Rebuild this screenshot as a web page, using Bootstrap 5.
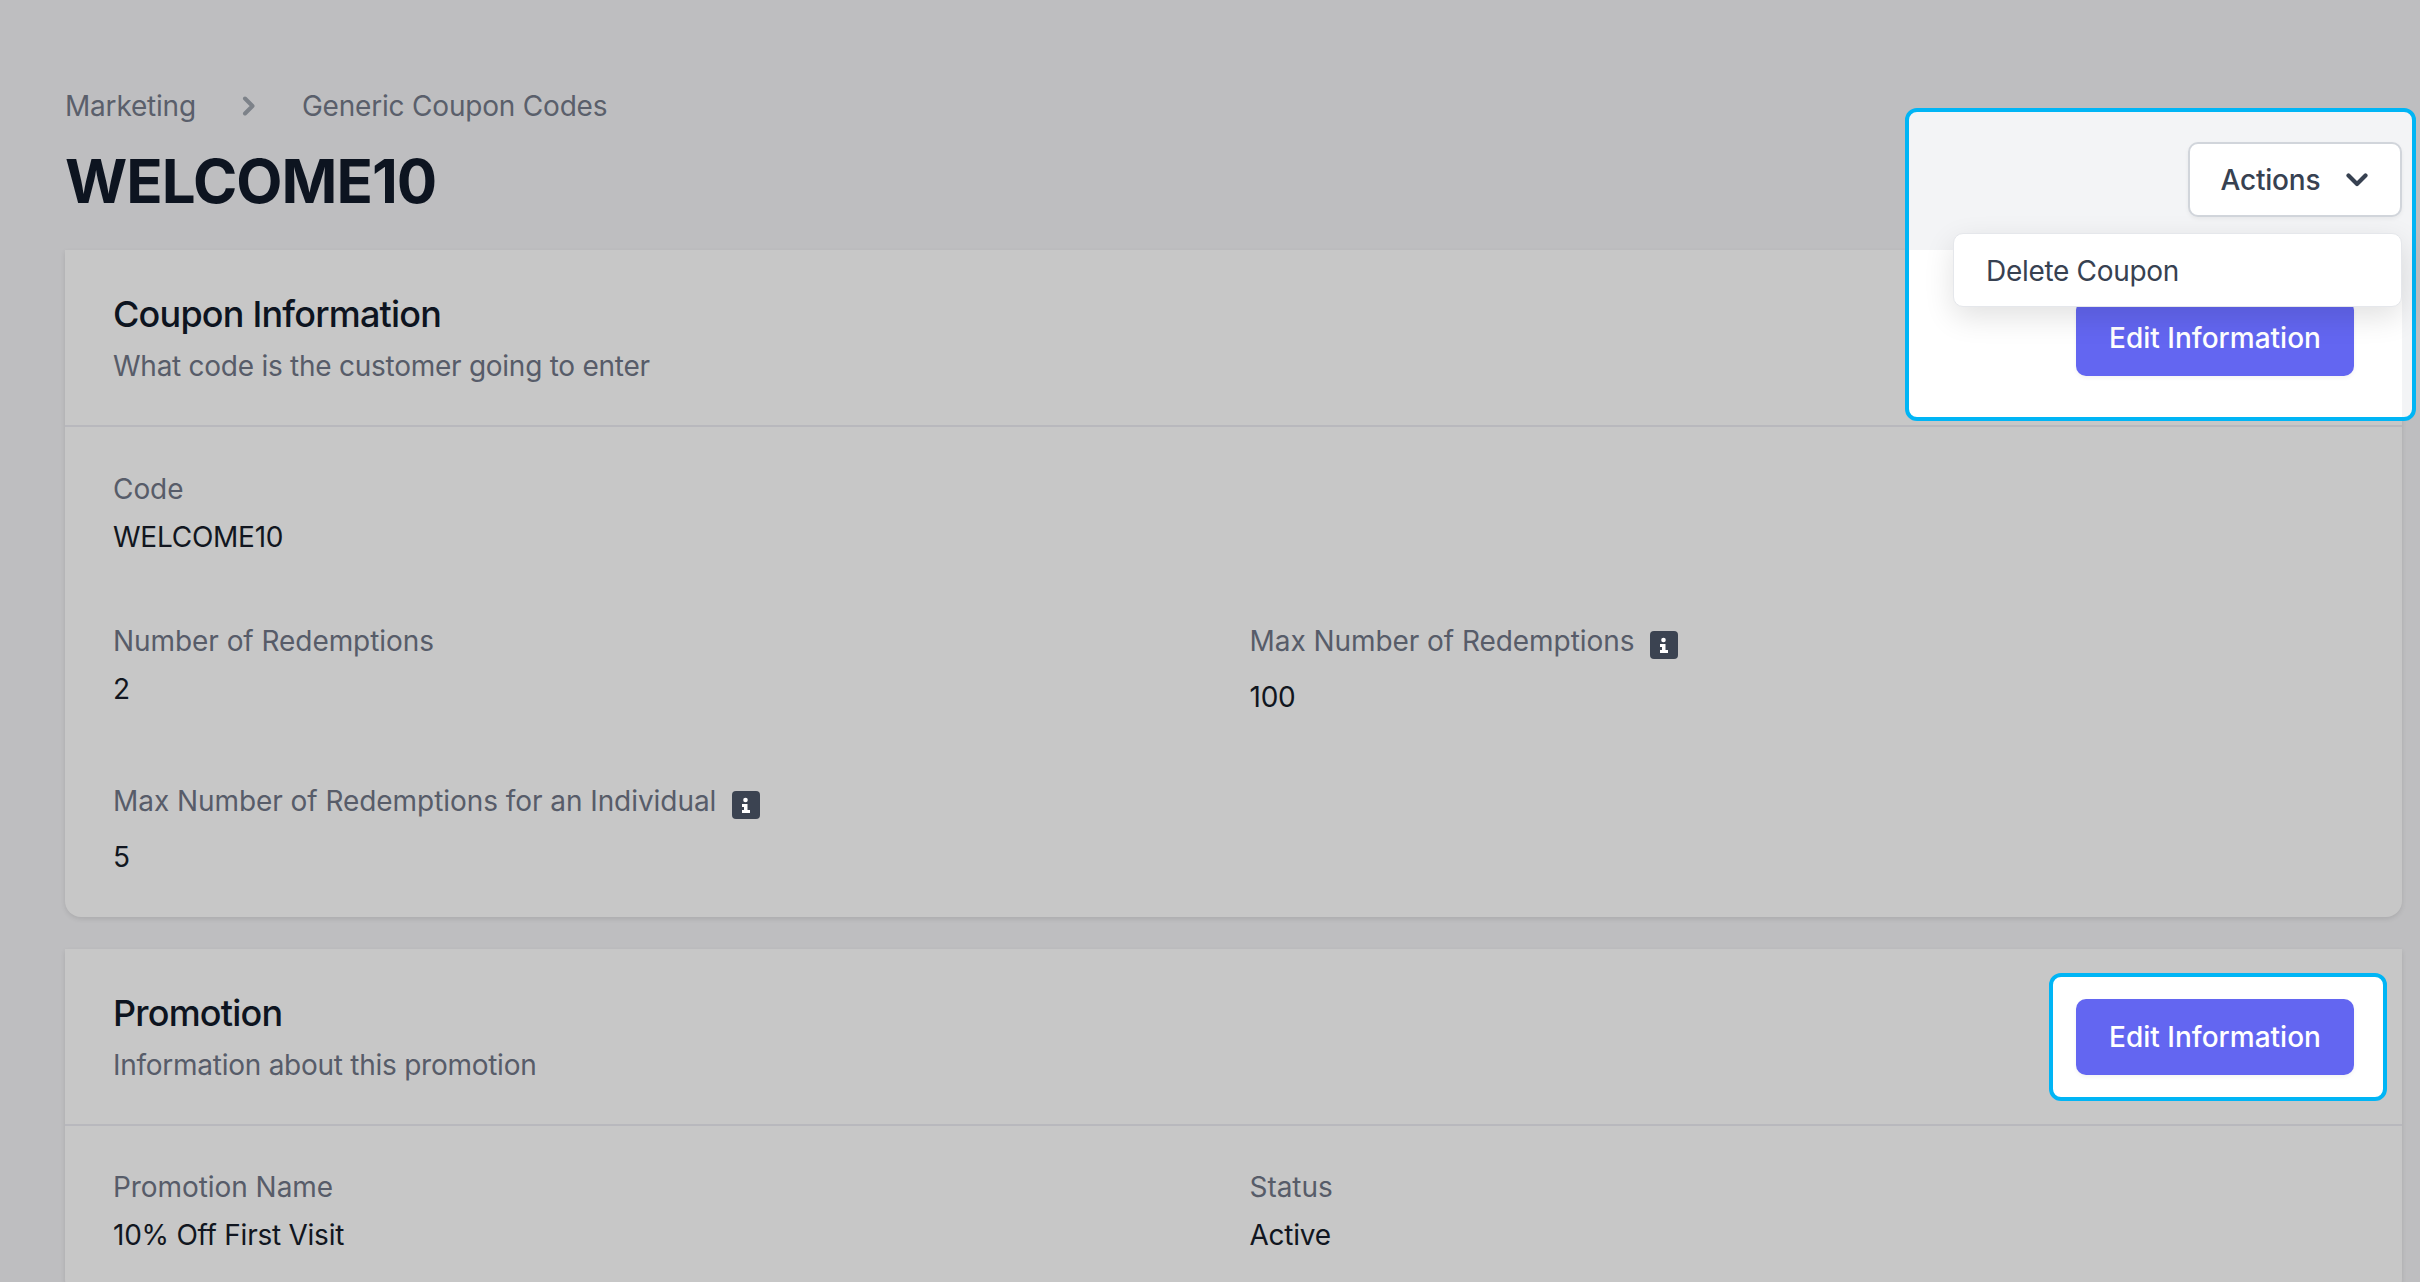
<!DOCTYPE html>
<html lang="en">
<head>
<meta charset="utf-8">
<title>WELCOME10</title>
<link href="https://cdn.jsdelivr.net/npm/bootstrap@5.3.0/dist/css/bootstrap.min.css" rel="stylesheet">
<style>
html,body{height:1282px;overflow:hidden}
body{background:#bebec0;font-family:Inter,"Liberation Sans",sans-serif;font-size:28px;line-height:40px;color:#111620}
.stage{position:relative;height:1282px;overflow:hidden;padding:86px 18px 0 65px}
.crumb-text{color:#5a5f6b;letter-spacing:-.2px}
.crumb-gap{gap:46px}
.page-title{font-size:60px;line-height:72px;font-weight:700;color:#0d1420;margin:19px 0 0;letter-spacing:-1px}
.head-row{margin-bottom:33px}
.act-wrap{position:relative;z-index:3}
.act-btn{height:75px;width:214.5px;padding:0 32px 0 31px;background:#fff;border:2px solid #d1d5db;border-radius:10px;color:#374151;font-size:28px;font-weight:500;line-height:40px;letter-spacing:-.2px;box-shadow:0 2px 4px rgba(0,0,0,.05)}
.act-btn:hover,.act-btn:active{background:#fff;border-color:#d1d5db;color:#374151}
.act-menu.dropdown-menu{position:absolute;top:91px;right:0;left:auto;width:449px;height:74px;margin:0;padding:17px 0;background:#fff;border:1px solid #e5e7eb;border-radius:10px;font-size:28px;box-shadow:0 10px 30px rgba(0,0,0,.12)}
.act-menu .dropdown-item{padding:0 32px;line-height:40px;color:#374151;font-weight:400;letter-spacing:-.3px}
.panel.card{background:#c7c7c7;border:0;border-radius:0 0 16px 16px;box-shadow:0 2px 5px rgba(0,0,0,.1);margin-bottom:32px;color:inherit;font-size:28px}
.panel-head{padding:40px 48px 40px 48px;border-bottom:2px solid #b8b8bd;height:177px}
.panel-title{font-size:36px;line-height:48px;font-weight:500;color:#0d1420;margin:0 0 8px;letter-spacing:-.8px}
.panel-sub{color:#575c69;margin:0;letter-spacing:-.26px}
.panel-body{padding:42px 48px 40px}
.panel-body-tight{padding-top:41px}
.grid-row{--bs-gutter-x:32px;--bs-gutter-y:64px}
.fld-label{color:#575c69;margin-bottom:8px;letter-spacing:-.06px}
.fld-value{letter-spacing:-.25px}
.info-line{margin-bottom:8px}
.info-ico{display:block;width:28px;height:28px;margin:10px 0 10px 16px;flex:none}
.prime-btn{position:relative;z-index:2;height:76px;width:278px;padding:0;background:#6366f1;border:0;border-radius:10px;color:#fff;font-size:28px;font-weight:500;line-height:40px;box-shadow:0 2px 4px rgba(0,0,0,.05)}
.prime-btn:hover,.prime-btn:active{background:#6366f1;color:#fff}
.spot{border:4px solid #00b5f5;border-radius:12px}
.spot-one{position:absolute;z-index:1;left:1905px;top:108px;width:511px;height:313px;background:linear-gradient(#f3f4f6,#f3f4f6) right top/10px 100% no-repeat,linear-gradient(#f3f4f6 138px,#fff 138px)}
.spot-two{background:#fff;padding:22px 29px 22px 23px;margin-right:-33px}
</style>
</head>
<body>
<div class="stage">
  <div class="spot spot-one"></div>
  <div class="d-flex justify-content-between align-items-end head-row">
    <div>
      <nav class="d-flex align-items-center crumb-gap">
        <span class="crumb-text">Marketing</span>
        <svg width="14" height="20" viewBox="0 0 14 20" aria-hidden="true"><path d="M3 2.500l7.500 7.500-7.500 7.500" fill="none" stroke="#7d8289" stroke-width="4" stroke-linecap="round" stroke-linejoin="round"/></svg>
        <span class="crumb-text">Generic Coupon Codes</span>
      </nav>
      <h1 class="page-title">WELCOME10</h1>
    </div>
    <div class="act-wrap">
      <button class="btn act-btn d-flex align-items-center justify-content-between" type="button">
        <span>Actions</span>
        <svg width="22" height="14" viewBox="0 0 22 14" aria-hidden="true"><path d="M2.500 2.500l8.500 8.500 8.500-8.500" fill="none" stroke="#374151" stroke-width="4.200" stroke-linecap="round" stroke-linejoin="round"/></svg>
      </button>
      <div class="dropdown-menu show act-menu"><a class="dropdown-item" href="#">Delete Coupon</a></div>
    </div>
  </div>

  <section class="card panel">
    <header class="panel-head d-flex justify-content-between align-items-center">
      <div>
        <h2 class="panel-title">Coupon Information</h2>
        <p class="panel-sub">What code is the customer going to enter</p>
      </div>
      <button class="btn prime-btn" type="button">Edit Information</button>
    </header>
    <div class="panel-body">
      <div class="row grid-row">
        <div class="col-12">
          <div class="fld-label">Code</div>
          <div class="fld-value">WELCOME10</div>
        </div>
        <div class="col-6">
          <div class="fld-label">Number of Redemptions</div>
          <div class="fld-value">2</div>
        </div>
        <div class="col-6">
          <div class="d-flex align-items-start info-line">
            <div class="fld-label mb-0">Max Number of Redemptions</div>
            <svg class="info-ico" viewBox="0 0 28 28" aria-hidden="true"><rect width="28" height="28" rx="4" fill="#3b4351"/><circle cx="13.500" cy="9" r="2.300" fill="#fff"/><path d="M10 13h5.500v6H18v3H10v-3h2v-3h-2z" fill="#fff"/></svg>
          </div>
          <div class="fld-value">100</div>
        </div>
        <div class="col-12">
          <div class="d-flex align-items-start info-line">
            <div class="fld-label mb-0">Max Number of Redemptions for an Individual</div>
            <svg class="info-ico" viewBox="0 0 28 28" aria-hidden="true"><rect width="28" height="28" rx="4" fill="#3b4351"/><circle cx="13.500" cy="9" r="2.300" fill="#fff"/><path d="M10 13h5.500v6H18v3H10v-3h2v-3h-2z" fill="#fff"/></svg>
          </div>
          <div class="fld-value">5</div>
        </div>
      </div>
    </div>
  </section>

  <section class="card panel">
    <header class="panel-head d-flex justify-content-between align-items-center">
      <div>
        <h2 class="panel-title">Promotion</h2>
        <p class="panel-sub">Information about this promotion</p>
      </div>
      <div class="spot spot-two"><button class="btn prime-btn d-block" type="button">Edit Information</button></div>
    </header>
    <div class="panel-body panel-body-tight">
      <div class="row grid-row">
        <div class="col-6">
          <div class="fld-label">Promotion Name</div>
          <div class="fld-value">10% Off First Visit</div>
        </div>
        <div class="col-6">
          <div class="fld-label">Status</div>
          <div class="fld-value">Active</div>
        </div>
      </div>
    </div>
  </section>
</div>
</body>
</html>
